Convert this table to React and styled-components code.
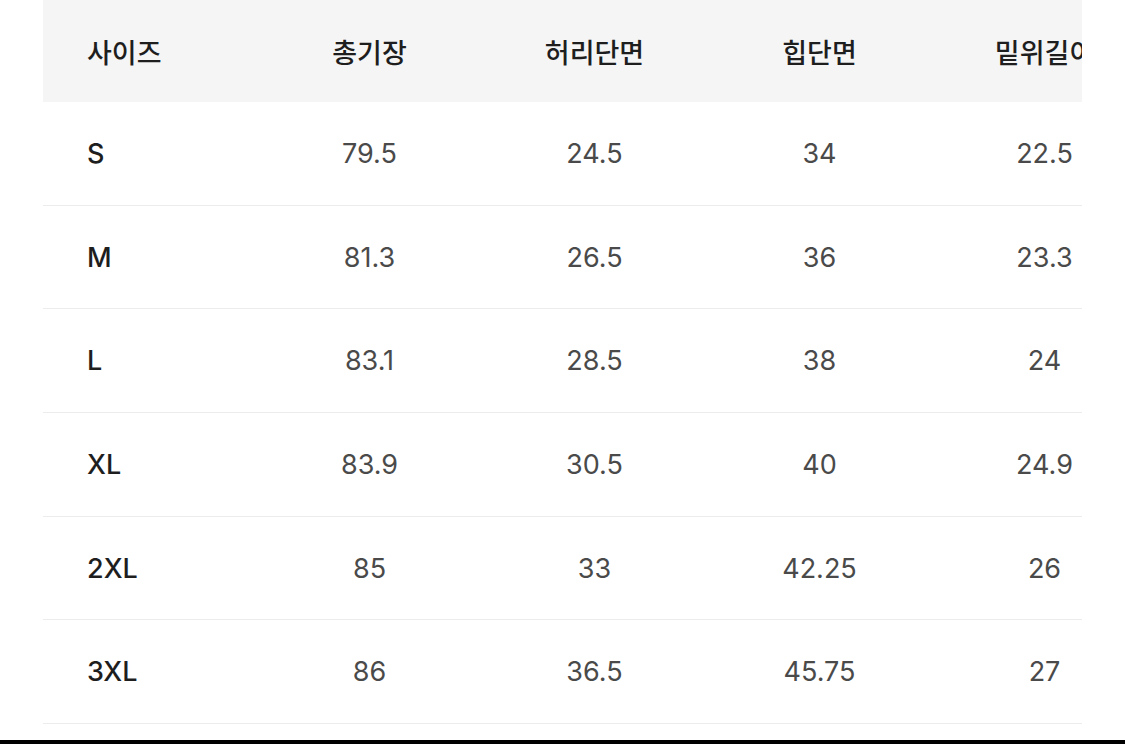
import React from "react";
import styled, { createGlobalStyle } from "styled-components";

const GlobalStyle = createGlobalStyle`
  html, body {
    margin: 0;
    padding: 0;
    background: #ffffff;
  }
  body {
    font-family: "Inter", "Noto Sans CJK KR", sans-serif;
  }
`;

const Page = styled.div`
  width: 1125px;
  height: 744px;
  display: flex;
  flex-direction: column;
  overflow: hidden;
`;

const ScrollArea = styled.div`
  flex: 1;
  margin-left: 43px;
  width: 1039px;
  overflow: hidden;
`;

const Table = styled.div`
  display: grid;
  grid-template-columns: 214px repeat(4, 225px);
  width: 1114px;
`;

const Cell = styled.div`
  display: flex;
  align-items: center;
  justify-content: ${(p) => (p.$first ? "flex-start" : "center")};
  padding-left: ${(p) => (p.$first ? "44px" : "0")};
  height: ${(p) => (p.$head ? "102px" : "103.7px")};
  box-sizing: border-box;
  white-space: nowrap;
  background: ${(p) => (p.$head ? "#f5f5f5" : "#ffffff")};
  border-bottom: ${(p) => (p.$head ? "none" : "1px solid #ececec")};
  font-size: ${(p) => (p.$head ? "27px" : "27px")};
  font-weight: ${(p) => (p.$head || p.$first ? 500 : 400)};
  color: ${(p) => (p.$head || p.$first ? "#1e1e1e" : "#4a4a4a")};
  font-family: ${(p) =>
    p.$head ? '"Noto Sans CJK KR", sans-serif' : '"Inter", "Noto Sans CJK KR", sans-serif'};
`;

const BottomBar = styled.div`
  height: 4px;
  background: #000000;
`;

const headers = ["사이즈", "총기장", "허리단면", "힙단면", "밑위길이"];

const rows = [
  ["S", "79.5", "24.5", "34", "22.5"],
  ["M", "81.3", "26.5", "36", "23.3"],
  ["L", "83.1", "28.5", "38", "24"],
  ["XL", "83.9", "30.5", "40", "24.9"],
  ["2XL", "85", "33", "42.25", "26"],
  ["3XL", "86", "36.5", "45.75", "27"],
];

export default function App() {
  return (
    <>
      <GlobalStyle />
      <Page>
        <ScrollArea>
          <Table>
            {headers.map((h, i) => (
              <Cell key={h} $head $first={i === 0}>
                {h}
              </Cell>
            ))}
            {rows.map((row) =>
              row.map((v, i) => (
                <Cell key={row[0] + i} $first={i === 0}>
                  {v}
                </Cell>
              ))
            )}
          </Table>
        </ScrollArea>
        <BottomBar />
      </Page>
    </>
  );
}
